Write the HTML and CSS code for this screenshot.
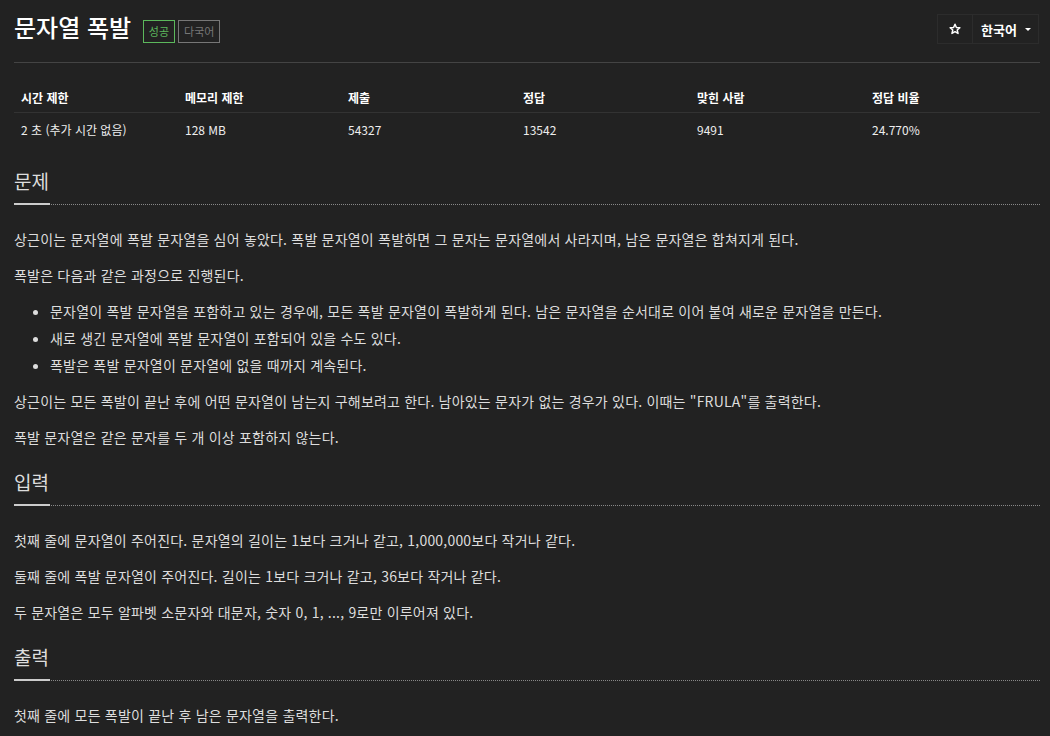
FILE: index.html
```html
<!DOCTYPE html>
<html lang="ko">
    <head>
        <meta charset="utf-8">
        <title>문자열 폭발</title>
        <link rel="stylesheet" href="styles.css">
    </head>
    <body>
        <div id="page">
            <div class="page-header">
                <h1 class="title">문자열 폭발 <span class="label label-success">성공</span><span class="label label-default">다국어</span></h1>
                <div class="btn-group">
                    <span class="btn btn-star">
                        <svg width="12" height="12" viewBox="0 0 24 24"><path d="M12 2.5l2.8 6.4 6.9.6-5.2 4.6 1.6 6.8L12 17.3 5.9 20.9l1.6-6.8L2.3 9.5l6.9-.6z" fill="none" stroke="#fff" stroke-width="3" stroke-linejoin="round"/></svg>
                    </span>
                    <span class="btn btn-lang">한국어 <span class="caret"></span></span>
                </div>
            </div>

            <table class="problem-info">
                <thead>
                    <tr>
                        <th class="col-time">시간 제한</th>
                        <th class="col-mem">메모리 제한</th>
                        <th class="col-wide">제출</th>
                        <th class="col-mid">정답</th>
                        <th class="col-wide">맞힌 사람</th>
                        <th>정답 비율</th>
                    </tr>
                </thead>
                <tbody>
                    <tr>
                        <td>2 초 (추가 시간 없음)</td>
                        <td>128 MB</td>
                        <td>54327</td>
                        <td>13542</td>
                        <td>9491</td>
                        <td>24.770%</td>
                    </tr>
                </tbody>
            </table>

            <section class="problem-section">
                <div class="headline"><h2>문제</h2></div>
                <div class="problem-text">
                    <p>상근이는 문자열에 폭발 문자열을 심어 놓았다. 폭발 문자열이 폭발하면 그 문자는 문자열에서 사라지며, 남은 문자열은 합쳐지게 된다.</p>
                    <p>폭발은 다음과 같은 과정으로 진행된다.</p>
                    <ul>
                        <li>문자열이 폭발 문자열을 포함하고 있는 경우에, 모든 폭발 문자열이 폭발하게 된다. 남은 문자열을 순서대로 이어 붙여 새로운 문자열을 만든다.</li>
                        <li>새로 생긴 문자열에 폭발 문자열이 포함되어 있을 수도 있다.</li>
                        <li>폭발은 폭발 문자열이 문자열에 없을 때까지 계속된다.</li>
                    </ul>
                    <p>상근이는 모든 폭발이 끝난 후에 어떤 문자열이 남는지 구해보려고 한다. 남아있는 문자가 없는 경우가 있다. 이때는 "FRULA"를 출력한다.</p>
                    <p>폭발 문자열은 같은 문자를 두 개 이상 포함하지 않는다.</p>
                </div>
            </section>

            <section class="problem-section">
                <div class="headline"><h2>입력</h2></div>
                <div class="problem-text">
                    <p>첫째 줄에 문자열이 주어진다. 문자열의 길이는 1보다 크거나 같고, 1,000,000보다 작거나 같다.</p>
                    <p>둘째 줄에 폭발 문자열이 주어진다. 길이는 1보다 크거나 같고, 36보다 작거나 같다.</p>
                    <p>두 문자열은 모두 알파벳 소문자와 대문자, 숫자 0, 1, ..., 9로만 이루어져 있다.</p>
                </div>
            </section>

            <section class="problem-section">
                <div class="headline"><h2>출력</h2></div>
                <div class="problem-text">
                    <p>첫째 줄에 모든 폭발이 끝난 후 남은 문자열을 출력한다.</p>
                </div>
            </section>
        </div>
    </body>
</html>
```

FILE: styles.css
```css
body{
    margin: 0;
    background-color: #222;
    color: #ddd;
    font-family: "Noto Sans CJK KR", "Noto Sans", sans-serif;
    font-size: 14px;
}

#page{
    padding: 0 10px 20px 14px;
}

.page-header{
    display: flex;
    justify-content: space-between;
    align-items: flex-start;
    border-bottom: 1px solid #444;
    padding: 12px 0 18px;
}

h1.title{
    margin: 0;
    font-size: 24px;
    font-weight: 500;
    color: #fff;
    line-height: 30px;
}

.label{
    display: inline-block;
    vertical-align: 1px;
    font-size: 11px;
    font-weight: normal;
    line-height: 13px;
    padding: 4px 5px;
    margin-left: 5px;
    border: 1px solid;
}

.label + .label{
    margin-left: 3px;
}

.label-success{
    color: #5cb85c;
    border-color: #5cb85c;
}

.label-default{
    color: #777;
    border-color: #777;
}

.btn-group{
    display: flex;
    margin: 2px 1px 0 0;
}

.btn{
    display: flex;
    align-items: center;
    box-sizing: border-box;
    height: 30px;
    border: 1px solid #2c2c2c;
    color: #fff;
    font-weight: bold;
    font-size: 13px;
}

.btn-star{
    width: 36px;
    justify-content: center;
}

.btn-lang{
    width: 66px;
    padding: 0 0 0 8px;
    border-left: none;
}

.caret{
    display: inline-block;
    margin-left: 8px;
    border-top: 3px solid #fff;
    border-left: 3px solid transparent;
    border-right: 3px solid transparent;
}

table.problem-info{
    width: 100%;
    border-collapse: collapse;
    table-layout: fixed;
    margin: 20px 0 7px;
    font-size: 12px;
}

.problem-info th,
.problem-info td{
    box-sizing: border-box;
}

.problem-info .col-time{
    width: 164px;
}

.problem-info .col-mem{
    width: 163px;
}

.problem-info .col-wide{
    width: 175px;
}

.problem-info .col-mid{
    width: 174px;
}

.problem-info th{
    text-align: left;
    color: #fff;
    font-weight: bold;
    padding: 6px 7px 6px;
    border-bottom: 1px solid #333;
}

.problem-info td{
    padding: 8px 7px;
    color: #eee;
}

.problem-section{
    margin-top: 22px;
}

.headline{
    border-bottom: 1px dotted #888;
    margin-bottom: 24px;
}

.headline h2{
    display: inline-block;
    margin: 0 0 -1px;
    font-size: 19px;
    font-weight: normal;
    color: #ddd;
    line-height: 26px;
    padding-bottom: 9px;
    border-bottom: 2px solid #ccc;
    width: 36px;
}

.problem-text{
    letter-spacing: 0.2px;
}

.problem-text p{
    margin: 0 0 16px;
    line-height: 20px;
}

.problem-text ul{
    margin: 0 0 16px;
    padding-left: 36px;
}

.problem-text li{
    line-height: 20px;
    margin-bottom: 7px;
}
```
